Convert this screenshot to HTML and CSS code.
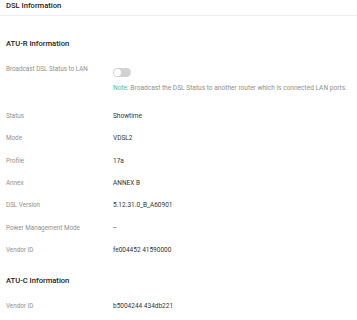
FILE: index.html
```html
<!DOCTYPE html>
<html>
<head>
<meta charset="utf-8">
<title>DSL Information</title>
<link rel="stylesheet" href="styles.css">
</head>
<body>
<div class="page-title">DSL Information</div>

<h2 class="section-title first">ATU-R Information</h2>

<div class="field broadcast">
  <div class="label">Broadcast DSL Status to LAN</div>
  <div class="value"><span class="toggle"><i></i></span></div>
</div>
<div class="note"><b>Note:</b> Broadcast the DSL Status to another router which is connected LAN ports.</div>

<div class="list">
  <div class="row"><div class="label">Status</div><div class="value">Showtime</div></div>
  <div class="row"><div class="label">Mode</div><div class="value">VDSL2</div></div>
  <div class="row"><div class="label">Profile</div><div class="value">17a</div></div>
  <div class="row"><div class="label">Annex</div><div class="value">ANNEX B</div></div>
  <div class="row"><div class="label">DSL Version</div><div class="value">5.12.31.0_B_A60901</div></div>
  <div class="row"><div class="label">Power Management Mode</div><div class="value">--</div></div>
  <div class="row"><div class="label">Vendor ID</div><div class="value">fe004452 41590000</div></div>
</div>

<h2 class="section-title second">ATU-C Information</h2>

<div class="list last">
  <div class="row"><div class="label">Vendor ID</div><div class="value">b5004244 434db221</div></div>
</div>
</body>
</html>
```
FILE: styles.css
```css
body {
  margin: 0;
  background: #ffffff;
  font-family: Roboto, "Liberation Sans", sans-serif;
  color: #333333;
  overflow: hidden;
}
.page-title {
  height: 15px;
  line-height: 11px;
  padding-left: 6px;
  font-size: 7.6px;
  font-weight: 500;
  color: #222222;
  border-bottom: 1px solid #ececec;
}
.section-title {
  margin: 0;
  padding-left: 6px;
  line-height: 12px;
  font-size: 7.6px;
  font-weight: 500;
  color: #222222;
}
.section-title.first {
  margin-top: 22px;
}
.section-title.second {
  margin-top: 14px;
}
.field {
  display: flex;
  padding-left: 6px;
  margin-top: 13px;
}
.label {
  width: 107px;
  flex: none;
  font-size: 6.3px;
  line-height: 12px;
  color: #8f8f8f;
}
.value {
  font-size: 6.5px;
  line-height: 12px;
  color: #333333;
}
.toggle {
  display: block;
  margin-top: 5px;
  width: 18px;
  height: 9px;
  border-radius: 5px;
  background: #d2d2d2;
  position: relative;
}
.toggle i {
  position: absolute;
  left: 1px;
  top: 1px;
  width: 7px;
  height: 7px;
  border-radius: 50%;
  background: #ffffff;
}
.note {
  margin-top: 6px;
  padding-left: 113px;
  font-size: 6.6px;
  line-height: 10px;
  color: #8f8f8f;
  white-space: nowrap;
}
.note b {
  font-weight: 400;
  color: #3fc3a4;
}
.list {
  margin-top: 12px;
}
.list.last {
  margin-top: 8px;
}
.row {
  display: flex;
  align-items: center;
  height: 22.33px;
  padding-left: 6px;
}
```
